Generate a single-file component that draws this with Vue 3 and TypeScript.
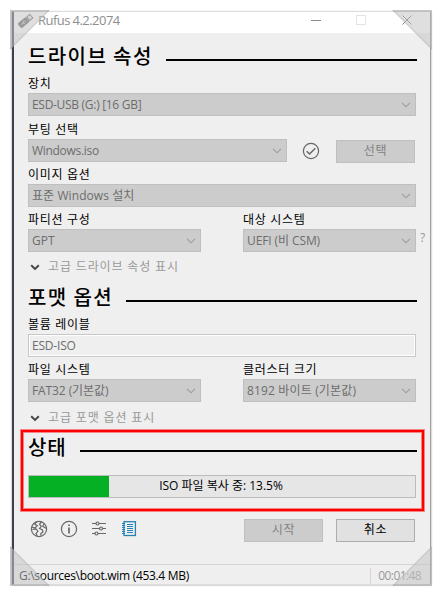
<script setup lang="ts">
const title = 'Rufus 4.2.2074'
const progress = 13.5
const barFill = 20.8
const corners = ['tl', 'tr', 'bl', 'br']
</script>

<template>
  <div class="page">
    <div class="window">
      <header class="titlebar">
        <svg class="usb" width="18" height="16" viewBox="0 0 18 16">
          <g transform="translate(8.5 8) rotate(-40)">
            <rect x="-8" y="-3.2" width="11" height="6.4" rx="1.6" fill="#666" />
            <rect x="3.6" y="-2.3" width="4" height="4.6" fill="#e8e8e8" stroke="#666" stroke-width="1" />
            <path d="M-6 0H1M-3 0l2-1.6M-4 0l2 1.6" stroke="#c4c4c4" stroke-width=".8" fill="none" />
          </g>
        </svg>
        <span class="title">{{ title }}</span>
        <svg class="controls" width="110" height="12" viewBox="0 0 110 12" fill="none">
          <path d="M0 6.5h10" stroke="#8c8c8c" />
          <rect x="45.5" y="1.5" width="9" height="9" stroke="#e4e4e4" />
          <path d="M91.500 1.500l9 9m0-9l-9 9" stroke="#777" />
        </svg>
      </header>

      <main class="content">
        <h2 class="heading first"><span class="h-drive">드라이브 속성</span><i></i></h2>
        <div class="label">장치</div>
        <div class="row">
          <div class="select"><span class="tight">ESD-USB (G:) [16 GB]</span><svg class="arrow" width="10" height="6"><path d="M1 .8l4 4 4-4" /></svg></div>
        </div>
        <div class="label l-boot">부팅 선택</div>
        <div class="row">
          <div class="select boot"><span class="tight">Windows.iso</span><svg class="arrow" width="10" height="6"><path d="M1 .8l4 4 4-4" /></svg></div>
          <svg class="check" width="18" height="18" viewBox="0 0 18 18" fill="none" stroke="#666" stroke-width="1.200"><circle cx="9" cy="9" r="7.600" /><path d="M4.700 9.200l2.900 2.900 5.700-5.800" stroke-width="1.400" /></svg>
          <button class="btn off pick">선택</button>
        </div>
        <div class="label">이미지 옵션</div>
        <div class="row">
          <div class="select"><span class="t-image">표준 Windows 설치</span><svg class="arrow" width="10" height="6"><path d="M1 .8l4 4 4-4" /></svg></div>
        </div>
        <div class="label pair"><span>파티션 구성</span><span>대상 시스템</span></div>
        <div class="row pair">
          <div class="select"><span>GPT</span><svg class="arrow" width="10" height="6"><path d="M1 .8l4 4 4-4" /></svg></div>
          <div class="select"><span class="t-uefi">UEFI (비 CSM)</span><svg class="arrow" width="10" height="6"><path d="M1 .8l4 4 4-4" /></svg></div>
          <span class="help">?</span>
        </div>
        <div class="more">
          <svg width="10" height="7" viewBox="0 0 10 7"><path d="M1.200 1.200l3.800 3.700 3.800-3.700" /></svg>
          <span>고급 드라이브 속성 표시</span>
        </div>

        <h2 class="heading format-h"><span class="h-format">포맷 옵션</span><i></i></h2>
        <div class="label">볼륨 레이블</div>
        <div class="row"><div class="field"><span class="t-vol">ESD-ISO</span></div></div>
        <div class="label pair"><span>파일 시스템</span><span>클러스터 크기</span></div>
        <div class="row pair">
          <div class="select"><span class="t-fat">FAT32 (기본값)</span><svg class="arrow" width="10" height="6"><path d="M1 .8l4 4 4-4" /></svg></div>
          <div class="select"><span class="t-bytes">8192 바이트 (기본값)</span><svg class="arrow" width="10" height="6"><path d="M1 .8l4 4 4-4" /></svg></div>
        </div>
        <div class="more last">
          <svg width="10" height="7" viewBox="0 0 10 7"><path d="M1.200 1.200l3.800 3.700 3.800-3.700" /></svg>
          <span>고급 포맷 옵션 표시</span>
        </div>

        <h2 class="heading status-h"><span class="h-status">상태</span><i></i></h2>
        <div class="progress">
          <div class="fill" :style="{ width: barFill + '%' }"></div>
          <span>ISO 파일 복사 중: {{ progress }}%</span>
        </div>

        <div class="actions">
          <div class="tools">
            <svg width="18" height="18" viewBox="0 0 18 18" fill="none" stroke="#686868" stroke-width="1.200">
              <circle cx="9" cy="9" r="7.600" />
              <path d="M6.800 1.800L4.500 4l2.800 1.700L5 8l-3-.8M2.500 9.500L6 8.800l2 2.500-2 2 1.200 3M11.500 2L9.500 4.300l1.700 2-1.700 2.300 2.800 1.200.7 2-2.200 2 .2 2M14 3.800l-1.300 2.400 3.300 2" />
            </svg>
            <svg width="18" height="18" viewBox="0 0 18 18" fill="none" stroke="#686868" stroke-width="1.200">
              <circle cx="9" cy="9" r="7.600" /><path d="M9 7.600v5.800M9 4.400v1.700" stroke-width="1.700" />
            </svg>
            <svg width="18" height="18" viewBox="0 0 18 18" fill="none" stroke="#686868" stroke-width="1.200">
              <path d="M2 3.500h4M9 3.500h7M2 8.500h7.500M12.500 8.500H16M2 13.500h3M8 13.500h8" />
              <circle cx="7.500" cy="3.500" r="1.500" /><circle cx="11" cy="8.500" r="1.500" /><circle cx="6.500" cy="13.500" r="1.500" />
            </svg>
            <svg width="18" height="18" viewBox="0 0 18 18" fill="none" stroke="#2583b5">
              <rect x="4" y="1.700" width="11.400" height="13.800" stroke-width="1.300" />
              <path d="M2 3.500h3M2 5.500h3M2 7.500h3M2 9.500h3M2 11.500h3M2 13.500h3M7 4.500h6M7 6.500h6M7 8.500h6M7 10.500h6M7 12.500h6" />
            </svg>
          </div>
          <button class="btn off">시작</button>
          <button class="btn">취소</button>
        </div>
      </main>

      <footer class="statusbar">
        <span class="path">G:\sources\boot.wim (453.4 MB)</span>
        <span class="time">00:01:48</span>
      </footer>
    </div>

    <div class="highlight"></div>
    <svg v-for="c in corners" :key="c" :class="['corner', c]" width="42" height="42" viewBox="0 0 42 42">
      <path d="M1 1H41L1 41Z" fill="#c4c4c4" fill-opacity=".55" />
      <path d="M1 2H40M2 1V40" stroke="#999" stroke-opacity=".3" stroke-width="2" />
      <path d="M40 1L1 40" stroke="#999" stroke-opacity=".22" stroke-width="1.500" />
    </svg>
  </div>
</template>

<style>
body { margin: 0; background: #fff; }
</style>

<style scoped>
* { box-sizing: border-box; }
.page {
  position: relative; width: 443px; height: 596px; padding: 11px 0 0 12px; overflow: hidden;
  background: #fff; color: #000; font: 12px/16px "Open Sans", "Noto Sans CJK KR", sans-serif;
}
.window {
  width: 419px; height: 574px; display: flex; flex-direction: column; background: #efefef;
  border: 1px solid #dcdcdc; border-left: 2px solid #3c4050; border-right: 1px solid #a0a0a0;
  box-shadow: 1px 1px 1px #ddd, -1px 0 1px #ddd;
}
.titlebar { height: 21px; flex: none; display: flex; align-items: center; background: #fff; padding: 0 17px 5px 3px; }
.usb { margin-top: 1px; flex: none; }
.title { margin-left: 3px; color: #8e8e8e; font-size: 13px; letter-spacing: -.55px; white-space: nowrap; }
.controls { margin-left: auto; margin-right: -8px; flex: none; }
.content { flex: 1; padding: 0 14px; display: flex; flex-direction: column; }
.heading {
  flex: none; display: flex; align-items: center; width: 389px; height: 24px; margin: 0;
  font-size: 20px; line-height: 24px; font-weight: 500; white-space: nowrap;
}
.heading.first { margin-top: 10px; }
.heading.format-h { margin-top: 9px; }
.heading.status-h { margin-top: 8px; }
.heading i { flex: 1; height: 2px; margin-top: 10px; background: #000; }
.heading span { flex: none; margin-top: 2px; font-family: "Noto Sans CJK KR", sans-serif; letter-spacing: 1.4px; }
.h-drive { width: 138px; }
.h-format { width: 98px; }
.heading .h-status { width: 52px; letter-spacing: .8px; }
.label { height: 16px; flex: none; margin: 5px 0 1px; line-height: 16px; letter-spacing: .7px; white-space: nowrap; }
.label.l-boot { margin-top: 6px; }
.heading + .label { margin-top: 9px; }
.row { height: 23px; flex: none; display: flex; position: relative; width: 388px; }
.pair { display: flex; gap: 42px; }
.label.pair { width: 388px; }
.label.pair > span { flex: 1; }
.select, .field {
  flex: 1; height: 23px; display: flex; align-items: center; padding: 0 5px 0 3px; border: 1px solid #bfbfbf;
  background: #ccc; color: #6d6d6d; white-space: nowrap;
}
.field { background: #efefef; border-color: #c8c8c8; box-shadow: inset 0 0 0 1px #fff; }
.tight { letter-spacing: -.3px; }
.t-image { letter-spacing: .08px; }
.t-uefi { letter-spacing: -.1px; }
.t-vol { letter-spacing: -.2px; }
.t-fat { letter-spacing: -.1px; }
.t-bytes { letter-spacing: .15px; }
.arrow { margin-left: auto; margin-right: -1px; }
.arrow path { fill: none; stroke: #9c9c9c; stroke-width: 1.1; }
.select.boot { flex: none; width: 259px; }
.check { margin: 3px 0 0 15px; }
.btn {
  width: 79px; height: 23px; padding: 0 0 1px; border: 1px solid #adadad; background: #e1e1e1;
  color: #000; font: inherit; letter-spacing: .6px; flex: none;
}
.btn.off { background: #ccc; border-color: #bfbfbf; color: #838383; }
.pick { margin: 1px 0 0 16px; }
.help { position: absolute; left: 392px; top: 1px; color: #999; font-size: 12px; }
.more { height: 16px; flex: none; display: flex; align-items: center; gap: 8px; margin-top: 7px; padding-left: 2px; color: #999; letter-spacing: .85px; white-space: nowrap; }
.more.last { margin-top: 8px; }
.more svg path { fill: none; stroke: #444; stroke-width: 1.9; }
.progress {
  position: relative; width: 388px; height: 23px; flex: none; margin-top: 17px; border: 1px solid #bcbcbc; background: #e6e6e6;
  display: flex; align-items: center; justify-content: center; white-space: nowrap;
}
.fill { position: absolute; left: 0; top: 0; bottom: 0; background: #06b025; }
.progress span { position: relative; margin: 0 2px 2px 0; }
.actions { display: flex; width: 387px; margin-top: 21px; gap: 13px; }
.tools { flex: 1; display: flex; gap: 12px; padding: 1px 0 0 2px; }
.statusbar { height: 20px; flex: none; display: flex; align-items: center; border-top: 1px solid #d5d5d5; padding: 2px 9px 0 5px; letter-spacing: -.31px; white-space: nowrap; }
.time { margin-left: auto; padding-left: 7px; border-left: 1px solid #d5d5d5; color: #999; letter-spacing: -.6px; }
.highlight { position: absolute; left: 21px; top: 430px; width: 403px; height: 81px; border: 2px solid #f00; box-shadow: 0 0 0 1px #ff000070, inset 0 0 0 1px #ff000070; }
.corner { position: absolute; fill: none; }
.tl { left: 9px; top: 9px; }
.tr { left: 391px; top: 9px; transform: scaleX(-1); }
.bl { left: 9px; top: 545px; transform: scaleY(-1); }
.br { left: 391px; top: 545px; transform: scale(-1); }
</style>
